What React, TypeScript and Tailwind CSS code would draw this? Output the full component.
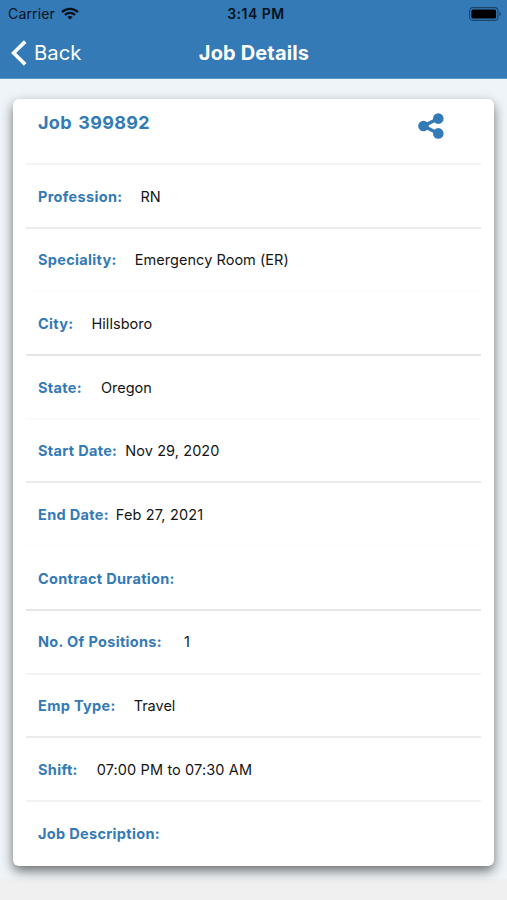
import React from 'react'

interface Detail {
  label: string
  value?: string
  gap?: string
  divider: string
}

const details: Detail[] = [
  { label: 'Profession:', value: 'RN', gap: 'ml-[18px]', divider: 'border-[#ebebeb]' },
  { label: 'Speciality:', value: 'Emergency Room (ER)', gap: 'ml-[18px] tracking-[0.05px]', divider: 'border-[#fdfdfd]' },
  { label: 'City:', value: 'Hillsboro', gap: 'ml-[18px] tracking-[0.05px]', divider: 'border-[#e6e6e6]' },
  { label: 'State:', value: 'Oregon', gap: 'ml-[19px]', divider: 'border-[#fafafa]' },
  { label: 'Start Date:', value: 'Nov 29, 2020', gap: 'ml-[8px] tracking-[0.08px]', divider: 'border-[#eaeaea]' },
  { label: 'End Date:', value: 'Feb 27, 2021', gap: 'ml-[7px] tracking-[0.15px]', divider: 'border-[#fdfdfd]' },
  { label: 'Contract Duration:', divider: 'border-[#e6e6e6]' },
  { label: 'No. Of Positions:', value: '1', gap: 'ml-[22px]', divider: 'border-[#f3f3f3]' },
  { label: 'Emp Type:', value: 'Travel', gap: 'ml-[18px]', divider: 'border-[#ebebeb]' },
  { label: 'Shift:', value: '07:00 PM to 07:30 AM', gap: 'ml-[19px] tracking-[0.12px]', divider: 'border-[#f2f2f2]' },
  { label: 'Job Description:', divider: 'border-transparent' },
]

const WifiIcon = () => (
  <svg width="18" height="13" viewBox="0 0 18 13" fill="none" stroke="#06121d" strokeWidth="2.3">
    <path d="M1 5.1C5.4 .7 12.6 .7 17 5.1" />
    <path d="M3.9 8C6.8 5.2 11.2 5.2 14.1 8" />
    <path d="M9 12.5 6.4 9.9C7.8 8.6 10.2 8.6 11.6 9.9Z" fill="#06121d" stroke="none" />
  </svg>
)

const BatteryIcon = () => (
  <svg width="33" height="14" viewBox="0 0 33 14" fill="none">
    <rect x=".6" y=".6" width="28.3" height="12.8" rx="3.2" stroke="#1d4467" strokeWidth="1.1" />
    <rect x="2.4" y="2.4" width="24.7" height="9.2" rx="1.6" fill="#000" />
    <path d="M30.3 4.6C32.4 5.4 32.4 8.6 30.3 9.4Z" fill="#1d4467" />
  </svg>
)

const BackIcon = () => (
  <svg width="16" height="26" viewBox="0 0 16 26" fill="none" stroke="#fff" strokeWidth="3.6">
    <path d="M14.2 1.6 2.6 13 14.2 24.4" />
  </svg>
)

const ShareIcon = () => (
  <svg width="26" height="26" viewBox="0 0 26 26" fill="#337ab7">
    <path d="M20.3 5.6 5.5 13 20.3 20.4" fill="none" stroke="#337ab7" strokeWidth="3.4" />
    <circle cx="5.5" cy="13" r="5.3" />
    <circle cx="20.3" cy="5.6" r="5.3" />
    <circle cx="20.3" cy="20.4" r="5.3" />
  </svg>
)

function Header() {
  return (
    <header className="h-[79px] bg-[#337ab7] border-b border-[#5c97c9]">
      <div className="grid h-[27px] grid-cols-3 items-center pl-[8px] pr-[5px] text-[14px] text-[#06121d]">
        <div className="flex items-center gap-[6px]">
          <span className="tracking-[0.15px]">Carrier</span>
          <WifiIcon />
        </div>
        <span className="pl-[2px] text-center font-semibold tracking-[0.5px]">3:14 PM</span>
        <div className="flex justify-end">
          <BatteryIcon />
        </div>
      </div>
      <div className="grid h-[51px] grid-cols-3 items-center pl-[11px] pr-[10px] text-white">
        <button className="flex items-center gap-[7px] text-[20.3px]">
          <BackIcon />
          <span className="pt-[2px]">Back</span>
        </button>
        <h1 className="whitespace-nowrap text-center text-[20px] font-bold tracking-[0.15px]">Job Details</h1>
      </div>
    </header>
  )
}

function DetailRow({ label, value, gap, divider }: Detail) {
  return (
    <div className={`flex h-[63.7px] items-center border-b-2 pl-[12px] pt-[1.4px] text-[14.5px] ${divider}`}>
      <span className="font-bold tracking-[0.32px] text-[#337ab7]">{label}</span>
      {value && <span className={`text-[#151515] ${gap}`}>{value}</span>}
    </div>
  )
}

function App() {
  return (
    <div className="flex h-[900px] w-[507px] flex-col overflow-hidden bg-[#f0f0f0] font-['Inter','Liberation_Sans',sans-serif]">
      <Header />
      <main className="h-[800px] bg-[#eef4f8] px-[13px] pt-[20px]">
        <section className="h-[767px] rounded-[6px] bg-white px-[13px] shadow-[0_5px_12px_rgba(0,0,0,0.55)]">
          <div className="flex h-[66px] justify-between border-b-2 border-[#f3f3f3] pl-[12px] pr-[37px]">
            <h2 className="pt-[10px] text-[18px] font-bold leading-[28px] tracking-[0.3px] [word-spacing:2px] text-[#337ab7]">Job 399892</h2>
            <div className="pt-[14px]">
              <ShareIcon />
            </div>
          </div>
          {details.map((detail) => (
            <DetailRow key={detail.label} {...detail} />
          ))}
        </section>
      </main>
    </div>
  )
}

export default App
